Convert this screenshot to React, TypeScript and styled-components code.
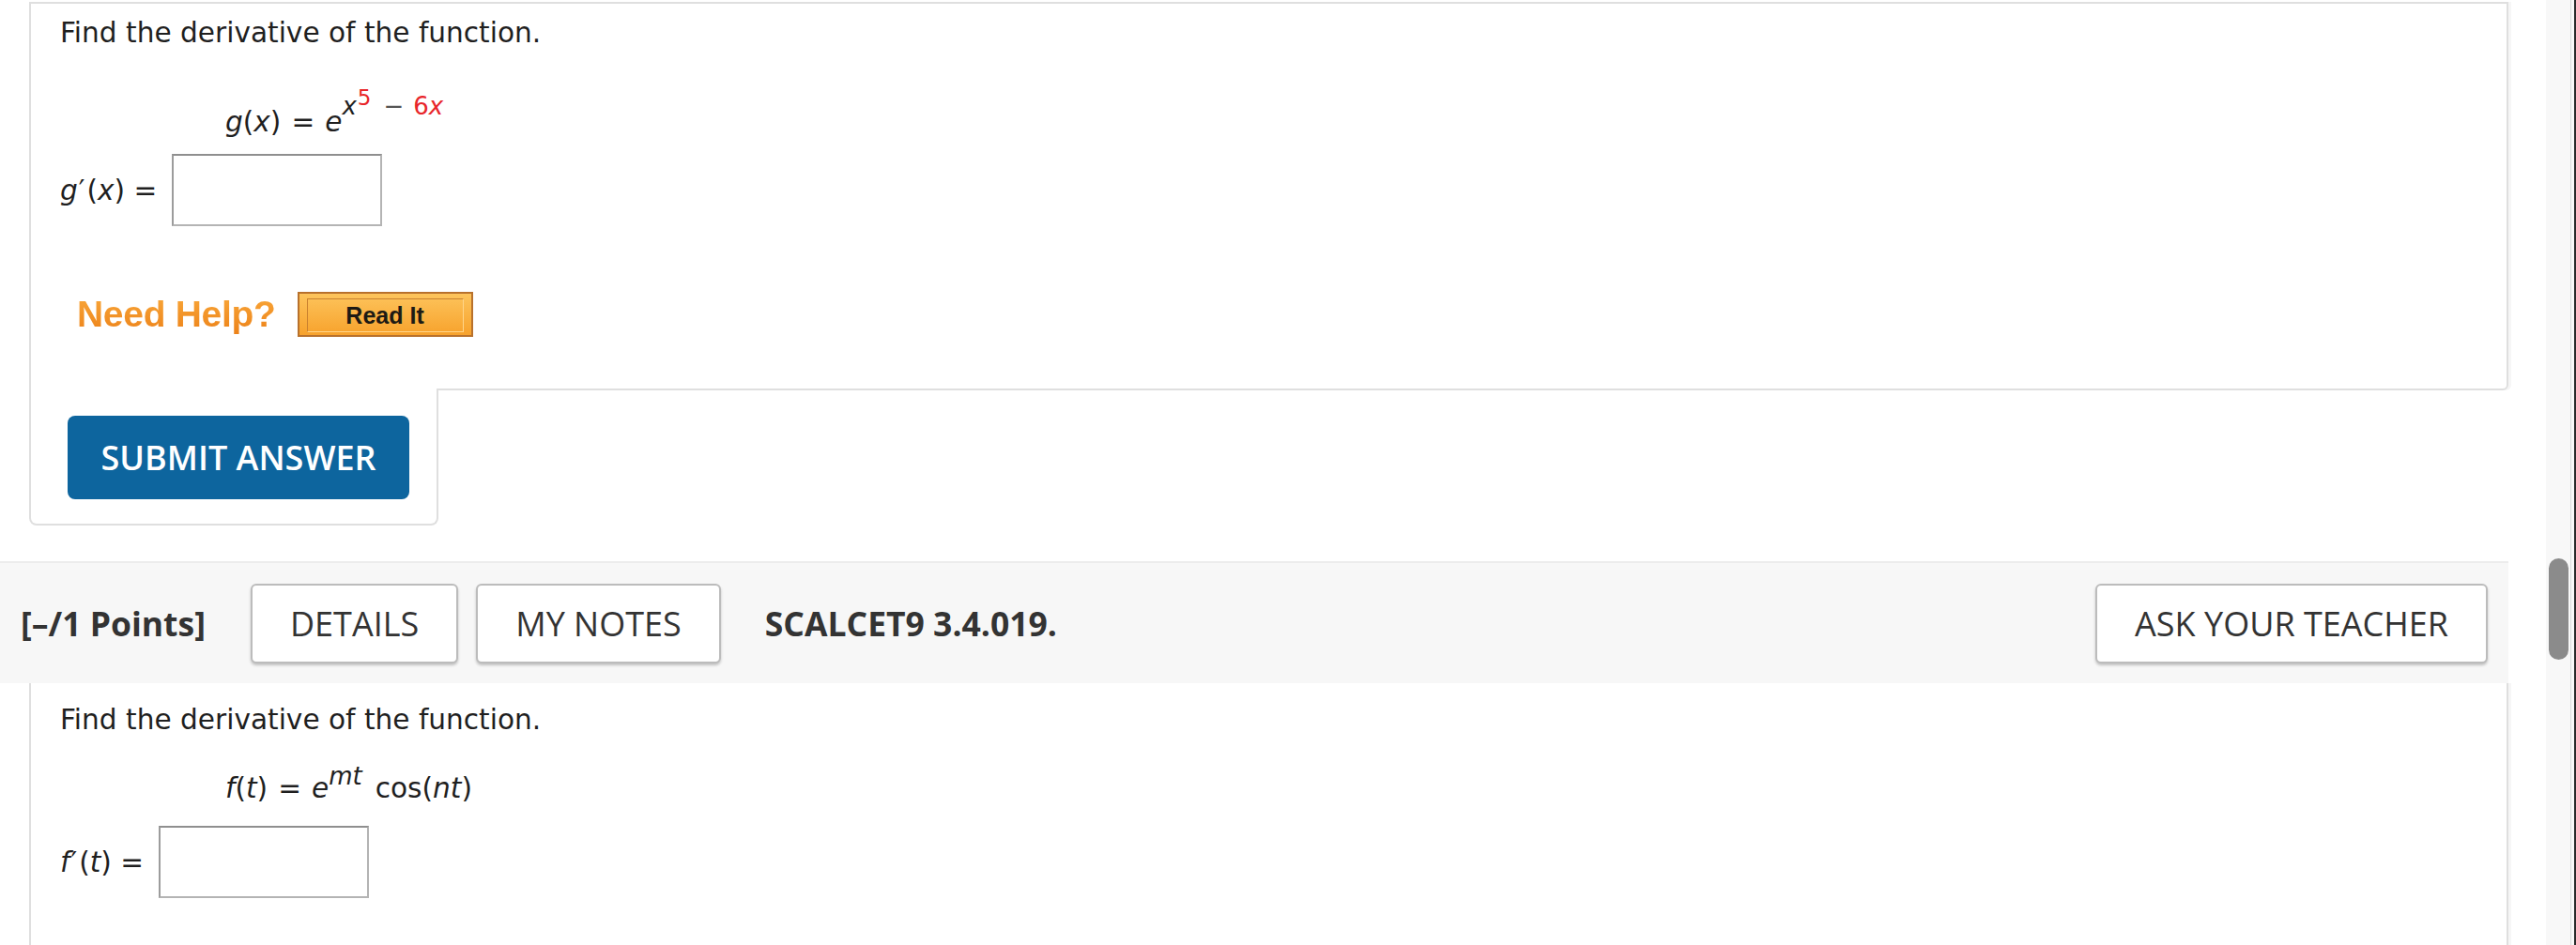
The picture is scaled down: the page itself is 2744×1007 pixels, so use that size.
import * as React from 'react'
import styled, { createGlobalStyle } from 'styled-components'

const GlobalStyle = createGlobalStyle`
	html, body {
		margin: 0;
		padding: 0;
		background: #fff;
	}
	body {
		font-family: 'DejaVu Sans', Verdana, sans-serif;
		color: #1f1f1f;
	}
`

const Window = styled.div`
	display: flex;
	width: 2744px;
	height: 1007px;
	overflow: hidden;
	background: #fff;
`

const Page = styled.main`
	flex: 1;
	min-width: 0;
	padding-top: 2px;
`

const Scrollbar = styled.div`
	flex: none;
	width: 32px;
	box-sizing: border-box;
	padding: 595px 0 0 3px;
	background: #f8f8f8;
	box-shadow: inset -2px 0 0 #2a2a2a, inset -5px 0 0 #f8f8f8, inset -6px 0 0 #dadada;
`

const Thumb = styled.div`
	width: 21px;
	height: 108px;
	border-radius: 11px;
	background: #8b8b8b;
`

const QuestionCard = styled.section`
	margin: 0 40px 0 31px;
`

const ContentBox = styled.div<{ $closed?: boolean }>`
	border: 2px solid #dfdfdf;
	border-top-width: ${(p) => (p.$closed ? '2px' : '0')};
	border-bottom-width: ${(p) => (p.$closed ? '2px' : '0')};
	border-radius: ${(p) => (p.$closed ? '0 0 6px 0' : '0')};
	padding: ${(p) => (p.$closed ? '14px 31px 55px' : '22px 31px 200px')};
	background: #fff;
	box-shadow: 3px 0 0 #f6f6f6;
`

const Prompt = styled.p`
	margin: 0;
	font-size: 29.6px;
	line-height: 34px;
`

const Formula = styled.div<{ $mt: number }>`
	height: 34px;
	margin: ${(p) => p.$mt}px 0 0 176px;
	font-size: 29.6px;
	line-height: 34px;
	white-space: nowrap;
`

const Var = styled.i`
	font-style: italic;
`

const Prime = styled.span`
	margin: 0 2px 0 1px;
`

const Eq = styled.span`
	margin: 0 11px;
`

const Sup = styled.span<{ $raise: number }>`
	font-size: 26px;
	line-height: 0;
	vertical-align: ${(p) => p.$raise}px;
`

const SupSup = styled.span`
	font-size: 23px;
	line-height: 0;
	vertical-align: 10px;
	margin-left: 1px;
	color: #e8262a;
`

const Minus = styled.span`
	margin: 0 10px 0 13px;
	color: #555;
`

const Red = styled.span`
	color: #e8262a;
`

const Func = styled.span`
	margin-left: 14px;
`

const AnswerRow = styled.div<{ $mt: number }>`
	display: flex;
	align-items: center;
	height: 77px;
	margin-top: ${(p) => p.$mt}px;
	font-size: 29.6px;
	line-height: 34px;
`

const AnswerInput = styled.input`
	width: 224px;
	height: 77px;
	box-sizing: border-box;
	margin-left: 16px;
	border: 2px solid #b4b4b4;
	border-top-color: #8f8f8f;
	border-left-color: #9c9c9c;
	background: #fff;
	outline: none;
`

const HelpRow = styled.div`
	display: flex;
	align-items: center;
	height: 48px;
	margin-top: 70px;
	padding-left: 18px;
`

const NeedHelp = styled.span`
	font-family: 'Liberation Sans', Arial, sans-serif;
	font-weight: 700;
	font-size: 39px;
	letter-spacing: -0.3px;
	background: linear-gradient(#f9a83a, #ec8118);
	-webkit-background-clip: text;
	background-clip: text;
	color: transparent;
`

const ReadIt = styled.button`
	width: 187px;
	height: 48px;
	box-sizing: border-box;
	margin-left: 23px;
	padding: 5px 8px;
	border: 2px solid #b8712c;
	background: linear-gradient(#fdc45c, #f7a22c);
	cursor: pointer;
`

const ReadItInner = styled.span`
	display: flex;
	align-items: center;
	justify-content: center;
	height: 100%;
	border: 1px solid;
	border-color: #c9812f #ffd58a #ffd58a #c9812f;
	font-family: 'Liberation Sans', Arial, sans-serif;
	font-weight: 700;
	font-size: 25px;
	color: #1d1a14;
`

const SubmitTab = styled.div`
	position: relative;
	width: 436px;
	box-sizing: border-box;
	margin-top: -2px;
	padding: 29px 29px 26px 39px;
	border: 2px solid #dfdfdf;
	border-top: none;
	border-radius: 0 0 8px 8px;
	background: #fff;
`

const SubmitButton = styled.button`
	display: flex;
	align-items: center;
	justify-content: center;
	width: 364px;
	height: 89px;
	border: none;
	border-radius: 8px;
	background: #0d659e;
	color: #fff;
	font-family: 'Open Sans', sans-serif;
	font-weight: 600;
	font-size: 36px;
	cursor: pointer;
`

const HeaderBar = styled.header`
	display: flex;
	align-items: center;
	height: 130px;
	box-sizing: border-box;
	margin: 38px 40px 0 0;
	padding: 0 22px;
	border-top: 2px solid #ececec;
	background: #f7f7f7;
	font-family: 'Open Sans', sans-serif;
	font-size: 36px;
	color: #333;
`

const Points = styled.span`
	font-weight: 700;
	font-size: 35.5px;
	margin-right: 48px;
`

const HeaderButton = styled.button<{ $ml?: number }>`
	height: 85px;
	padding: 0 40px;
	margin-left: ${(p) => p.$ml ?? 0}px;
	border: 2px solid #bcbcbc;
	border-radius: 6px;
	background: #fff;
	box-shadow: 0 2px 3px rgba(0, 0, 0, 0.22);
	font-family: 'Open Sans', sans-serif;
	font-size: 36px;
	color: #333;
	cursor: pointer;
`

const ProblemId = styled.span`
	margin-left: 47px;
	font-weight: 700;
	font-size: 35.5px;
`

const Spacer = styled.div`
	flex: 1;
`

const App = () => {
	return (
		<>
			<GlobalStyle />
			<Window>
				<Page>
					<QuestionCard>
						<ContentBox $closed>
							<Prompt>Find the derivative of the function.</Prompt>
							<Formula $mt={52}>
								<Var>g</Var>(<Var>x</Var>)<Eq>=</Eq>
								<Var>e</Var>
								<Sup $raise={18}>
									<Var>x</Var>
									<SupSup>5</SupSup>
									<Minus>−</Minus>
									<Red>
										6<Var>x</Var>
									</Red>
								</Sup>
							</Formula>
							<AnswerRow $mt={26}>
								<span>
									<Var>g</Var>
									<Prime>′</Prime>(<Var>x</Var>) =
								</span>
								<AnswerInput type="text" />
							</AnswerRow>
							<HelpRow>
								<NeedHelp>Need Help?</NeedHelp>
								<ReadIt>
									<ReadItInner>Read It</ReadItInner>
								</ReadIt>
							</HelpRow>
						</ContentBox>
						<SubmitTab>
							<SubmitButton>SUBMIT ANSWER</SubmitButton>
						</SubmitTab>
					</QuestionCard>

					<HeaderBar>
						<Points>[–/1 Points]</Points>
						<HeaderButton>DETAILS</HeaderButton>
						<HeaderButton $ml={19}>MY NOTES</HeaderButton>
						<ProblemId>SCALCET9 3.4.019.</ProblemId>
						<Spacer />
						<HeaderButton>ASK YOUR TEACHER</HeaderButton>
					</HeaderBar>
					<QuestionCard>
						<ContentBox>
							<Prompt>Find the derivative of the function.</Prompt>
							<Formula $mt={39}>
								<Var>f</Var>(<Var>t</Var>)<Eq>=</Eq>
								<Var>e</Var>
								<Sup $raise={14}>
									<Var>mt</Var>
								</Sup>
								<Func>
									cos(<Var>nt</Var>)
								</Func>
							</Formula>
							<AnswerRow $mt={23}>
								<span>
									<Var>f</Var>
									<Prime>′</Prime>(<Var>t</Var>) =
								</span>
								<AnswerInput type="text" />
							</AnswerRow>
						</ContentBox>
					</QuestionCard>
				</Page>
				<Scrollbar>
					<Thumb />
				</Scrollbar>
			</Window>
		</>
	)
}

export default App
